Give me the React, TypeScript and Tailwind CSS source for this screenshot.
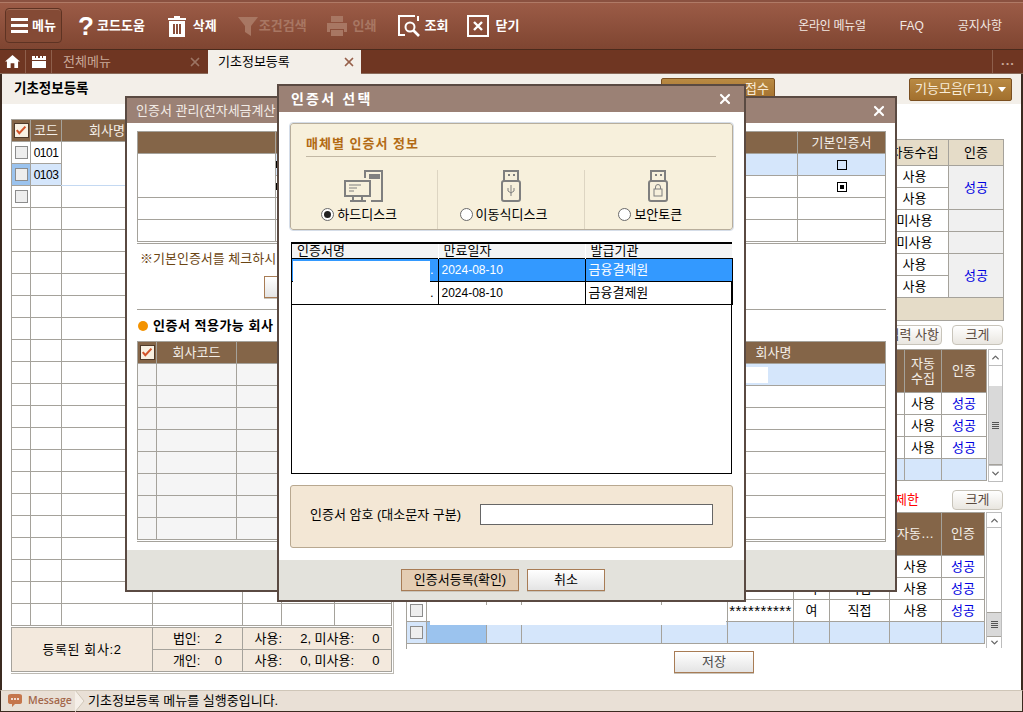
import React from "react";
import { X, ChevronUp, ChevronDown } from "lucide-react";

const cell = "border border-[#a5a29b] p-0 text-center font-normal";
const brown = "border border-[#a5a29b] p-0 text-center font-normal bg-[#846548] text-[#f4efe8]";

function Box() {
  return <span className="block mx-auto w-[13px] h-[13px] bg-[#eeeeee] border border-[#8c8c8c]" />;
}

function HeadCheck() {
  return (
    <span className="block mx-auto w-[15px] h-[15px] bg-[#f8f0e2] border border-[#4f3a2a]">
      <svg viewBox="0 0 15 15" className="w-[13px] h-[13px]">
        <path d="M2 7l3 3.5L12 3" fill="none" stroke="#d2532a" strokeWidth="2.4" />
      </svg>
    </span>
  );
}

function Grip() {
  return (
    <span className="flex flex-col gap-px">
      <span className="block w-[7px] h-px bg-[#555]" />
      <span className="block w-[7px] h-px bg-[#555]" />
      <span className="block w-[7px] h-px bg-[#555]" />
      <span className="block w-[7px] h-px bg-[#555]" />
    </span>
  );
}

function LightButton({ children, className }: { children: React.ReactNode; className: string }) {
  return (
    <div className={`flex items-center justify-center bg-gradient-to-b from-white to-[#e4e4e4] border border-[#a87c55] shadow-[0_1px_0_#c9c4ba] text-[#4a4a4a] ${className}`}>
      {children}
    </div>
  );
}

function RoundButton({ children, className }: { children: React.ReactNode; className: string }) {
  return (
    <div className={`flex items-center rounded-[4px] bg-gradient-to-b from-white to-[#e9e6e0] border border-[#c8c4ba] text-[#5a4a3e] ${className}`}>
      {children}
    </div>
  );
}

function ToolItem({ icon, label, dim, className }: { icon: React.ReactNode; label: string; dim?: boolean; className: string }) {
  return (
    <div className={`flex items-center font-bold ${dim ? "text-[#a87763]" : "text-white"} ${className}`}>
      {icon}
      <span>{label}</span>
    </div>
  );
}

function Toolbar() {
  return (
    <div className="h-[50px] shrink-0 flex items-center bg-gradient-to-b from-[#9c5c47] to-[#7f4531] border-t-2 border-t-[#8a5140] border-b border-b-[#4a2a1c] shadow-[inset_0_1px_0_#b07a66] pl-[5px]">
      <div className="w-[57px] h-[35px] flex items-center justify-center gap-[4px] rounded-[4px] bg-[#844a35] border border-[#5e3323] shadow-[inset_0_1px_0_#a06a55] font-bold text-white">
        <span className="flex flex-col gap-[3px]">
          <span className="block w-[17px] h-[3px] bg-white" />
          <span className="block w-[17px] h-[3px] bg-white" />
          <span className="block w-[17px] h-[3px] bg-white" />
        </span>
        <span>메뉴</span>
      </div>
      <ToolItem
        className="ml-[16px] gap-[5px]"
        label="코드도움"
        icon={<span className="w-[14px] text-[26px] leading-none font-['Liberation_Sans',sans-serif]">?</span>}
      />
      <ToolItem
        className="ml-[23px] gap-[7px]"
        label="삭제"
        icon={
          <svg viewBox="0 0 18 22" className="w-[18px] h-[22px]">
            <path d="M6 1h6v2h6v2H0V3h6z" fill="#fff" />
            <path fillRule="evenodd" d="M1 6h16v16H1zM5 9v10h2V9zM8 9v10h2V9zM11 9v10h2V9z" fill="#fff" />
          </svg>
        }
      />
      <ToolItem
        dim
        className="ml-[21px] gap-[1px]"
        label="조건검색"
        icon={
          <svg viewBox="0 0 20 20" className="w-[20px] h-[20px]">
            <path d="M0 1h20l-7 9v10l-6-4v-6z" fill="#a87763" />
          </svg>
        }
      />
      <ToolItem
        dim
        className="ml-[19px] gap-[5px]"
        label="인쇄"
        icon={
          <svg viewBox="0 0 22 22" className="w-[22px] h-[22px]">
            <path d="M5 1h12v6H5zM1 8h20v9h-3v-3H4v3H1zM5 15h12v6H5z" fill="#a87763" />
          </svg>
        }
      />
      <ToolItem
        className="ml-[21px] gap-[5px]"
        label="조회"
        icon={
          <svg viewBox="0 0 22 22" className="w-[22px] h-[22px]" fill="none" stroke="#fff" strokeWidth="2">
            <path d="M17 1H1v19h6" />
            <path d="M20 1v5" />
            <circle cx="12" cy="12" r="4.5" />
            <path d="M15.5 15.5L21 21" strokeWidth="2.6" />
          </svg>
        }
      />
      <ToolItem
        className="ml-[19px] gap-[6px]"
        label="닫기"
        icon={
          <svg viewBox="0 0 22 22" className="w-[22px] h-[22px]" fill="none" stroke="#fff" strokeWidth="2">
            <rect x="1" y="1" width="20" height="20" />
            <path d="M7 7l8 8M15 7l-8 8" strokeWidth="2.4" />
          </svg>
        }
      />
      <div className="ml-auto flex items-center gap-[34px] pr-[21px] text-[12px] text-[#f3e9e3]">
        <span className="tracking-[-0.3px]">온라인 메뉴얼</span>
        <span>FAQ</span>
        <span>공지사항</span>
      </div>
    </div>
  );
}

function Tabs() {
  return (
    <div className="h-[24px] shrink-0 flex bg-[#6f3622] border-b border-b-[#8a6a5a]">
      <div className="w-[26px] flex items-center justify-center border-r border-r-[#8e5f4c]">
        <svg viewBox="0 0 16 14" className="w-[15px] h-[13px]">
          <path d="M8 0l8 7h-2v7h-4V9H6v5H2V7H0z" fill="#fff" />
        </svg>
      </div>
      <div className="w-[26px] flex items-center justify-center border-r border-r-[#8e5f4c]">
        <svg viewBox="0 0 14 12" className="w-[14px] h-[12px]">
          <path d="M0 0h3v2h1V0h2v2h2V0h2v2h1V0h3v4H0zM0 5h14v7H0z" fill="#fff" />
        </svg>
      </div>
      <div className="w-[156px] flex items-center justify-between pl-[11px] pr-[6px] text-[#c9a897]">
        <span>전체메뉴</span>
        <X size={14} strokeWidth={3} color="#9c7463" />
      </div>
      <div className="w-[153px] h-[24px] flex items-center justify-between pl-[10px] pr-[5px] bg-[#f3efe9] text-black">
        <span>기초정보등록</span>
        <X size={14} strokeWidth={3} color="#96604a" />
      </div>
      <div className="ml-auto w-[31px] flex items-center justify-center border-l border-l-[#8e5f4c] text-[#c9a897] font-bold tracking-[1px] pb-[2px]">
        ...
      </div>
    </div>
  );
}

const leftRows = Array.from({ length: 19 });

function LeftTable() {
  return (
    <div className="self-start w-[383px] border-r border-b border-[#bdbab3] pb-[1px]">
      <table className="table-fixed border-collapse w-[380px]">
        <colgroup>
          <col className="w-[19px]" />
          <col className="w-[31px]" />
          <col className="w-[91px]" />
          <col className="w-[90px]" />
          <col className="w-[39px]" />
          <col className="w-[53px]" />
          <col className="w-[57px]" />
        </colgroup>
        <thead>
          <tr className="h-[22px]">
            <th className={brown}><HeadCheck /></th>
            <th className={brown}>코드</th>
            <th className={brown}>회사명</th>
            <th className={brown} />
            <th className={brown} />
            <th className={brown} />
            <th className={brown} />
          </tr>
        </thead>
        <tbody>
          <tr className="h-[22px]">
            <td className={cell}><Box /></td>
            <td className={`${cell} text-[12px] tracking-[-0.5px]`}>0101</td>
            <td className={`${cell} border-b-[#c4d9f2]`} rowSpan={2} />
            <td className={cell} />
            <td className={cell} />
            <td className={cell} />
            <td className={cell} />
          </tr>
          <tr className="h-[22px]">
            <td className={`${cell} bg-[#9bc3ee]`}><Box /></td>
            <td className={`${cell} bg-[#d5e6fb] text-[12px] tracking-[-0.5px]`}>0103</td>
            <td className={cell} />
            <td className={cell} />
            <td className={cell} />
            <td className={cell} />
          </tr>
          <tr className="h-[22px]">
            <td className={cell}><Box /></td>
            <td className={cell} />
            <td className={cell} />
            <td className={cell} />
            <td className={cell} />
            <td className={cell} />
            <td className={cell} />
          </tr>
          {leftRows.map((_, i) => (
            <tr key={i} className="h-[22px]">
              <td className={cell} />
              <td className={cell} />
              <td className={cell} />
              <td className={cell} />
              <td className={cell} />
              <td className={cell} />
              <td className={cell} />
            </tr>
          ))}
        </tbody>
      </table>
      <table className="table-fixed border-collapse w-[380px] bg-[#f3e9dd] mt-[1px]">
        <colgroup>
          <col className="w-[141px]" />
          <col className="w-[90px]" />
          <col className="w-[149px]" />
        </colgroup>
        <tbody>
          <tr className="h-[22px]">
            <td className={`${cell} tracking-[0.6px]`} rowSpan={2}>등록된 회사:2</td>
            <td className={cell}>법인:&nbsp;&nbsp;&nbsp; 2</td>
            <td className={cell}>사용:&nbsp;&nbsp;&nbsp;&nbsp; 2, 미사용:&nbsp;&nbsp;&nbsp;&nbsp; 0</td>
          </tr>
          <tr className="h-[22px]">
            <td className={cell}>개인:&nbsp;&nbsp;&nbsp; 0</td>
            <td className={cell}>사용:&nbsp;&nbsp;&nbsp;&nbsp; 0, 미사용:&nbsp;&nbsp;&nbsp;&nbsp; 0</td>
          </tr>
        </tbody>
      </table>
    </div>
  );
}

function UpperRight() {
  const head = "border border-[#a5a29b] p-0 text-center font-normal bg-[#e5dcc8]";
  const auth = "border border-[#a5a29b] p-0 text-center bg-[#f0f0f0] text-[#0000e0]";
  return (
    <table className="table-fixed border-collapse w-[597px]">
      <colgroup>
        <col className="w-[474px]" />
        <col className="w-[68px]" />
        <col className="w-[55px]" />
      </colgroup>
      <tbody>
        <tr className="h-[26px]">
          <td className={head} />
          <td className={head}>자동수집</td>
          <td className={head}>인증</td>
        </tr>
        <tr className="h-[22px]">
          <td className={cell} />
          <td className={cell}>사용</td>
          <td className={auth} rowSpan={2}>성공</td>
        </tr>
        <tr className="h-[22px]">
          <td className={cell} />
          <td className={cell}>사용</td>
        </tr>
        <tr className="h-[22px]">
          <td className={cell} />
          <td className={cell}>미사용</td>
          <td className={auth} />
        </tr>
        <tr className="h-[22px]">
          <td className={cell} />
          <td className={cell}>미사용</td>
          <td className={auth} />
        </tr>
        <tr className="h-[22px]">
          <td className={cell} />
          <td className={cell}>사용</td>
          <td className={auth} rowSpan={2}>성공</td>
        </tr>
        <tr className="h-[22px]">
          <td className={cell} />
          <td className={cell}>사용</td>
        </tr>
        <tr className="h-[23px]">
          <td className={head} colSpan={3} />
        </tr>
      </tbody>
    </table>
  );
}

function MiddleRight() {
  const link = "border border-[#a5a29b] p-0 text-center text-[#0000e0]";
  const blue = "border border-[#a5a29b] p-0 bg-[#d5e6fb]";
  const rows = [0, 1, 2];
  return (
    <div className="flex w-[597px]">
      <table className="table-fixed border-collapse w-[580px] h-[131px]">
        <colgroup>
          <col className="w-[498px]" />
          <col className="w-[37px]" />
          <col className="w-[45px]" />
        </colgroup>
        <tbody>
          <tr className="h-[43px]">
            <td className={brown} />
            <td className={`${brown} leading-[15px]`}>자동<br />수집</td>
            <td className={brown}>인증</td>
          </tr>
          {rows.map((r) => (
            <tr key={r} className="h-[22px]">
              <td className={cell} />
              <td className={cell}>사용</td>
              <td className={link}>성공</td>
            </tr>
          ))}
          <tr className="h-[22px]">
            <td className={blue} />
            <td className={blue} />
            <td className={blue} />
          </tr>
        </tbody>
      </table>
      <div className="w-[16px] ml-[1px] h-[133px] flex flex-col border-x border-[#bdbdbd]">
        <span className="h-[17px] flex items-center justify-center border-y border-[#bdbdbd]">
          <ChevronUp size={11} strokeWidth={3} color="#666" />
        </span>
        <span className="h-[20px]" />
        <span className="h-[79px] flex items-center justify-center bg-[#d9d9d9] border-b border-[#a5a29b]">
          <Grip />
        </span>
        <span className="h-[17px] flex items-center justify-center border-y border-[#bdbdbd]">
          <ChevronDown size={11} strokeWidth={3} color="#666" />
        </span>
      </div>
    </div>
  );
}

function LowerRight() {
  const link = "border border-[#a5a29b] p-0 text-center text-[#0000e0]";
  const blue = "border border-[#a5a29b] p-0 bg-[#d5e6fb]";
  return (
    <div className="relative flex w-[597px]">
      <div className="w-[579px] h-[136px]">
        <table className="table-fixed border-collapse w-[578px]">
          <colgroup>
            <col className="w-[20px]" />
            <col className="w-[60px]" />
            <col className="w-[35px]" />
            <col className="w-[140px]" />
            <col className="w-[66px]" />
            <col className="w-[66px]" />
            <col className="w-[36px]" />
            <col className="w-[60px]" />
            <col className="w-[52px]" />
            <col className="w-[43px]" />
          </colgroup>
          <tbody>
            <tr className="h-[43px]">
              <td className={brown} colSpan={8} />
              <td className={brown}>자동…</td>
              <td className={brown}>인증</td>
            </tr>
            <tr className="h-[22px]">
              <td className={cell} colSpan={6} />
              <td className={cell}>여</td>
              <td className={cell}>직접</td>
              <td className={cell}>사용</td>
              <td className={link}>성공</td>
            </tr>
            <tr className="h-[22px]">
              <td className={cell} colSpan={6} />
              <td className={cell}>여</td>
              <td className={cell}>직접</td>
              <td className={cell}>사용</td>
              <td className={link}>성공</td>
            </tr>
            <tr className="h-[22px]">
              <td className={cell}><Box /></td>
              <td className={cell} />
              <td className={cell} />
              <td className={cell} />
              <td className={cell} />
              <td className={`${cell} text-[15px] leading-none tracking-[0.4px]`}>**********</td>
              <td className={cell}>여</td>
              <td className={cell}>직접</td>
              <td className={cell}>사용</td>
              <td className={link}>성공</td>
            </tr>
            <tr className="h-[22px]">
              <td className={blue}><Box /></td>
              <td className="border border-[#a5a29b] p-0 bg-[#9bc3ee]" />
              <td className={blue} />
              <td className={blue} />
              <td className={blue} />
              <td className={blue} />
              <td className={blue} />
              <td className={blue} />
              <td className={blue} />
              <td className={blue} />
            </tr>
          </tbody>
        </table>
        <div className="w-px h-[5px] bg-[#a5a29b]" />
      </div>
      <div className="absolute left-[24px] top-[93px] w-[296px] h-[20px] bg-white" />
      <div className="w-[16px] ml-[1px] h-[136px] flex flex-col border-x border-[#bdbdbd]">
        <span className="h-[16px] flex items-center justify-center border-y border-[#bdbdbd]">
          <ChevronUp size={11} strokeWidth={3} color="#666" />
        </span>
        <span className="h-[84px]" />
        <span className="h-[25px] flex items-center justify-center bg-[#d9d9d9] border-y border-[#a5a29b]">
          <Grip />
        </span>
        <span className="h-[11px] flex items-center justify-center overflow-hidden">
          <ChevronDown size={11} strokeWidth={3} color="#666" />
        </span>
      </div>
    </div>
  );
}

function RightPanel() {
  return (
    <div className="w-[597px] pt-[20px] flex flex-col">
      <UpperRight />
      <div className="h-[28px] flex items-center justify-end gap-[10px]">
        <RoundButton className="w-[150px] h-[20px] justify-end pr-[2px]">입력 사항</RoundButton>
        <RoundButton className="w-[51px] h-[20px] justify-center">크게</RoundButton>
      </div>
      <MiddleRight />
      <div className="h-[30px] pt-[6px] flex items-center justify-end gap-[33px]">
        <span className="text-[#ff0000]">제한</span>
        <RoundButton className="w-[51px] h-[20px] justify-center">크게</RoundButton>
      </div>
      <LowerRight />
      <div className="pl-[268px] pt-[3px]">
        <LightButton className="w-[80px] h-[22px]">저장</LightButton>
      </div>
    </div>
  );
}

function StatusBar() {
  return (
    <div className="h-[22px] shrink-0 flex items-center bg-[#e9e0d6] border-t border-t-[#cfc6b8] border-b border-b-[#3b2a20] border-x border-x-[#3b2a20] pl-[6px]">
      <svg viewBox="0 0 16 14" className="w-[16px] h-[14px]">
        <path d="M1 2q0-2 3-2h8q3 0 3 2v6q0 2-3 2H8l-3 3v-3H4q-3 0-3-2z" fill="#c5764c" />
        <circle cx="5" cy="5" r="1" fill="#fff" />
        <circle cx="8" cy="5" r="1" fill="#fff" />
        <circle cx="11" cy="5" r="1" fill="#fff" />
      </svg>
      <span className="ml-[5px] w-[47px] text-[#a3674a] font-semibold font-['Open_Sans',sans-serif] text-[10.5px]">Message</span>
      <svg viewBox="0 0 10 22" className="w-[10px] h-[22px]">
        <path d="M0 0l9 11-9 11" fill="#f5efe8" stroke="#cfc6b8" />
      </svg>
      <span className="ml-[3px]">기초정보등록 메뉴를 실행중입니다.</span>
    </div>
  );
}

function MiddleDialog() {
  const rows = [0, 1, 2, 3, 4, 5, 6];
  return (
    <div className="absolute left-[125px] top-[96px] w-[772px] h-[496px] bg-white border-2 border-[#5a4a42] flex flex-col">
      <div className="h-[25px] shrink-0 flex items-center justify-between bg-[#9b8175] pl-[9px] pr-[8px] text-[#f2ebe5]">
        <span className="whitespace-nowrap">인증서 관리(전자세금계산</span>
        <X size={16} strokeWidth={3.2} color="#fff" />
      </div>
      <div className="flex-1 flex flex-col pl-[10px] pt-[8px]">
        <div className="w-[749px] border-r border-b border-[#a5a29b] pb-[1px]">
          <table className="table-fixed border-collapse w-[748px]">
            <colgroup>
              <col className="w-[138px]" />
              <col className="w-[522px]" />
              <col className="w-[88px]" />
            </colgroup>
            <tbody>
              <tr className="h-[22px]">
                <td className={brown} />
                <td className={brown} />
                <td className={brown}>기본인증서</td>
              </tr>
              <tr className="h-[22px]">
                <td className={cell} rowSpan={2} />
                <td className={`${cell} bg-[#d5e6fb]`}><span className="block w-px h-[7px] bg-black" /></td>
                <td className={`${cell} bg-[#d5e6fb]`}><span className="block mx-auto w-[10px] h-[10px] border border-black" /></td>
              </tr>
              <tr className="h-[22px]">
                <td className={cell}><span className="block w-px h-[7px] bg-black" /></td>
                <td className={cell}>
                  <span className="flex items-center justify-center mx-auto w-[10px] h-[10px] border border-black bg-white">
                    <span className="block w-[4px] h-[4px] bg-black" />
                  </span>
                </td>
              </tr>
              <tr className="h-[22px]">
                <td className={cell} />
                <td className={cell} />
                <td className={cell} />
              </tr>
              <tr className="h-[22px]">
                <td className={cell} />
                <td className={cell} />
                <td className={cell} />
              </tr>
            </tbody>
          </table>
        </div>
        <div className="h-[30px] flex items-center pl-[3px] text-[#6b4512]">
          <span className="whitespace-nowrap">※기본인증서를 체크하시</span>
        </div>
        <div className="pl-[127px] pt-[2px]">
          <LightButton className="w-[110px] h-[22px]">{""}</LightButton>
        </div>
        <div className="w-[749px] mt-[11px] border-t border-[#a5a29b]" />
        <div className="h-[31px] flex items-center gap-[5px] pl-[1px] font-bold text-black">
          <span className="w-[10px] h-[10px] rounded-full bg-[#f39200]" />
          <span className="whitespace-nowrap tracking-[0.5px]">인증서 적용가능 회사</span>
        </div>
        <div className="w-[749px] border-r border-b border-[#a5a29b] pb-[1px]">
          <table className="table-fixed border-collapse w-[748px]">
            <colgroup>
              <col className="w-[19px]" />
              <col className="w-[80px]" />
              <col className="w-[425px]" />
              <col className="w-[224px]" />
            </colgroup>
            <tbody>
              <tr className="h-[22px]">
                <td className={brown}><HeadCheck /></td>
                <td className={brown}>회사코드</td>
                <td className={brown} />
                <td className={brown}>회사명</td>
              </tr>
              <tr className="h-[22px]">
                <td className={`${cell} bg-[#f5f5f5]`} />
                <td className={`${cell} bg-[#f5f5f5]`} />
                <td className={`${cell} bg-[#f5f5f5]`} />
                <td className={`${cell} bg-[#d5e6fb]`}><span className="block ml-[84px] w-[22px] h-[16px] bg-white" /></td>
              </tr>
              {rows.map((r) => (
                <tr key={r} className="h-[22px]">
                  <td className={`${cell} bg-[#f5f5f5]`} />
                  <td className={`${cell} bg-[#f5f5f5]`} />
                  <td className={`${cell} bg-[#f5f5f5]`} />
                  <td className={cell} />
                </tr>
              ))}
            </tbody>
          </table>
        </div>
      </div>
      <div className="h-[40px] shrink-0 bg-[#e3e2dc]" />
    </div>
  );
}

function Radio({ on, label, className }: { on?: boolean; label: string; className: string }) {
  return (
    <div className={`flex items-center gap-[3px] ${className}`}>
      <span className="w-[13px] h-[13px] rounded-full bg-white border border-[#6a6a6a] flex items-center justify-center">
        {on && <span className="w-[7px] h-[7px] rounded-full bg-[#222]" />}
      </span>
      <span>{label}</span>
    </div>
  );
}

function MediaPanel() {
  return (
    <div className="mx-[11px] mt-[11px] h-[107px] shrink-0 rounded-[3px] bg-[#f7f0dc] border border-[#b8ae9c] outline outline-1 outline-[#d5dde8] px-[16px] pt-[10px] flex flex-col">
      <div className="h-[23px] pb-[5px] -ml-px border-b border-b-[#c2b8a4] text-[#b36b14] font-bold tracking-[1px]">매체별 인증서 정보</div>
      <div className="flex mt-[13px] -mx-[16px] h-[59px]">
        <div className="w-[147px] flex flex-col items-center relative">
          <svg viewBox="0 0 40 32" className="w-[40px] h-[32px]" fill="none" stroke="#7f7f7f" strokeWidth="2">
            <path d="M21 8V1h17v30H27" />
            <path d="M26 5h9v3h-9z" fill="#7f7f7f" />
            <rect x="1" y="11" width="25" height="15" fill="#f7f0dc" />
            <path d="M5 15h12M5 18h8M5 21h5" strokeWidth="1" />
            <path d="M9 26v5M18 26v5M6 31h16" />
          </svg>
          <Radio on label="하드디스크" className="mt-[3px] pr-[10px]" />
        </div>
        <div className="w-[147px] flex flex-col items-center border-l border-l-[#ddd5c2]">
          <svg viewBox="0 0 20 32" className="w-[20px] h-[32px]" fill="none" stroke="#7f7f7f" strokeWidth="2">
            <path d="M3 11V1h14v10" />
            <path d="M7 5h2M12 5h2" />
            <rect x="1" y="11" width="18" height="20" rx="2" />
            <path d="M10 15v11M7 18v3l3 2 3-2v-3" strokeWidth="1" />
          </svg>
          <Radio label="이동식디스크" className="mt-[3px] pr-[15px]" />
        </div>
        <div className="w-[149px] flex flex-col items-center border-l border-l-[#ddd5c2]">
          <svg viewBox="0 0 20 32" className="w-[20px] h-[32px]" fill="none" stroke="#7f7f7f" strokeWidth="2">
            <path d="M3 11V1h14v10" />
            <path d="M7 5h2M12 5h2" />
            <rect x="1" y="11" width="18" height="20" rx="2" />
            <rect x="6" y="19" width="8" height="7" strokeWidth="1" />
            <path d="M7.5 19v-2a2.5 2.5 0 0 1 5 0v2" strokeWidth="1" />
          </svg>
          <Radio label="보안토큰" className="mt-[3px] pr-[16px]" />
        </div>
      </div>
    </div>
  );
}

function CertList() {
  const bc = "border-r border-b border-black pl-[3px] text-left p-0";
  return (
    <div className="relative mx-[12px] mt-[12px] h-[232px] shrink-0 border border-black border-t-2">
      <table className="table-fixed border-collapse w-[440px]">
        <colgroup>
          <col className="w-[146px]" />
          <col className="w-[147px]" />
          <col className="w-[147px]" />
        </colgroup>
        <thead>
          <tr className="h-[14px] bg-[#f4f4f4] border-b border-b-black">
            <th className="pl-[5px] p-0 text-left font-normal leading-[13px]">인증서명</th>
            <th className="pl-[5px] p-0 text-left font-normal leading-[13px] border-l border-l-white">만료일자</th>
            <th className="pl-[5px] p-0 text-left font-normal leading-[13px] border-l border-l-white">발급기관</th>
          </tr>
        </thead>
        <tbody>
          <tr className="h-[23px] bg-[#3399ff] text-white">
            <td className={`${bc} text-right pr-[4px]`}>.</td>
            <td className={`${bc} pl-[2px] text-[12px]`}>2024-08-10</td>
            <td className={`${bc} pl-[2px]`}>금융결제원</td>
          </tr>
          <tr className="h-[23px]">
            <td className={`${bc} text-right pr-[4px]`}>.</td>
            <td className={`${bc} pl-[2px] text-[12px]`}>2024-08-10</td>
            <td className={`${bc} pl-[2px]`}>금융결제원</td>
          </tr>
        </tbody>
      </table>
      <div className="absolute left-[1px] top-[17px] w-[137px] h-[42px] bg-white" />
    </div>
  );
}

function FrontDialog() {
  return (
    <div className="absolute left-[277px] top-[84px] w-[469px] h-[518px] bg-white border-2 border-[#5a4a42] flex flex-col">
      <div className="h-[26px] shrink-0 flex items-center justify-between bg-[#9b8175] pl-[12px] pr-[11px] text-white font-bold text-[14px] tracking-[2.2px]">
        <span>인증서 선택</span>
        <X size={16} strokeWidth={3.2} color="#fff" />
      </div>
      <MediaPanel />
      <CertList />
      <div className="mx-[11px] mt-[11px] h-[63px] shrink-0 rounded-[3px] bg-[#f3e7d5] border border-[#b8a890] flex items-center pl-[19px] pb-[4px]">
        <span className="w-[170px]">인증서 암호 (대소문자 구분)</span>
        <span className="w-[233px] h-[21px] bg-white border border-[#666]" />
      </div>
      <div className="mt-[12px] flex-1 bg-[#e3e2dc] flex items-center gap-[8px] pl-[122px]">
        <div className="w-[118px] h-[22px] flex items-center justify-center bg-[#e4cdb3] border border-[#a87c55] shadow-[0_1px_0_#c9c4ba]">인증서등록(확인)</div>
        <LightButton className="w-[78px] h-[22px] text-black">취소</LightButton>
      </div>
    </div>
  );
}

export default function App() {
  return (
    <div className="relative w-[1023px] h-[712px] overflow-hidden bg-white flex flex-col text-[13px] text-black font-['Liberation_Sans','Noto_Sans_CJK_KR',sans-serif]">
      <Toolbar />
      <Tabs />
      <div className="flex-1 flex flex-col border-x-2 border-x-[#3b2a20] min-h-0">
        <div className="h-[30px] shrink-0 flex items-center justify-between bg-[#f3efe9] pl-[12px] pr-[9px]">
          <span className="font-bold text-[13.5px]">기초정보등록</span>
          <div className="flex items-center gap-[134px]">
            <div className="w-[114px] h-[23px] flex items-center justify-end pr-[5px] rounded-[2px] bg-gradient-to-b from-[#b98a43] to-[#a2702e] border border-[#7a4f20] text-[#f8ecd8]">접수</div>
            <div className="w-[103px] h-[23px] flex items-center justify-center gap-[5px] rounded-[2px] bg-gradient-to-b from-[#b98a43] to-[#a2702e] border border-[#7a4f20] text-[#f8ecd8]">
              <span>기능모음(F11)</span>
              <span className="w-0 h-0 border-x-[4px] border-x-transparent border-t-[5px] border-t-white" />
            </div>
          </div>
        </div>
        <div className="flex-1 flex pt-[15px] pl-[9px] gap-[12px]">
          <LeftTable />
          <RightPanel />
        </div>
      </div>
      <StatusBar />
      <MiddleDialog />
      <FrontDialog />
    </div>
  );
}
